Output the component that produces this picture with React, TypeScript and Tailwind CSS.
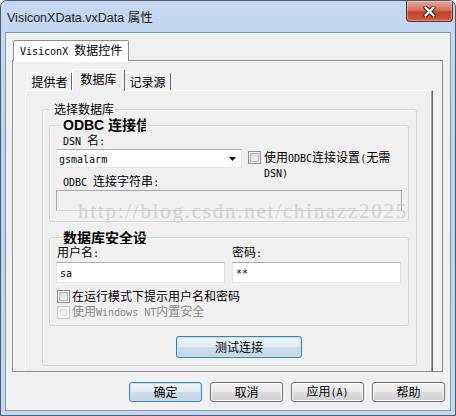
import React from "react";

// latin runs use the narrow mono face, CJK runs inherit 12px
const Mixed = ({ text }: { text: string }) => {
  const parts = text.match(/[\x00-\xff]+|[^\x00-\xff]+/g) || [];
  return (
    <span>
      {parts.map((p, i) =>
        /^[\x00-\xff]/.test(p) ? (
          <span key={i} className="font-['DejaVu_Sans_Mono',monospace] text-[10px]">
            {p}
          </span>
        ) : (
          <span key={i}>{p}</span>
        )
      )}
    </span>
  );
};

const Check = ({ disabled }: { disabled?: boolean }) =>
  disabled ? (
    <span className="block h-[13px] w-[13px] shrink-0 border border-[#c8c8c8] bg-[#f4f4f4] p-[2px]">
      <span className="block h-full w-full border border-[#dedede] bg-[#f0f0f0]" />
    </span>
  ) : (
    <span className="block h-[13px] w-[13px] shrink-0 border border-[#8e8f8f] bg-[#f4f4f4] p-[1px]">
      <span className="block h-full w-full border border-[#b5b8bd] bg-[linear-gradient(135deg,#d6d8db,#f8f8f8)]" />
    </span>
  );

const Btn = ({ label, def, className = "" }: { label: string; def?: boolean; className?: string }) => (
  <div
    className={
      def
        ? `flex items-center justify-center rounded-[3px] border border-[#3c7fb1] bg-[linear-gradient(#eef5fa_0%,#dfeaf2_50%,#cddde9_50%,#c3d6e4_100%)] shadow-[inset_0_0_0_1px_#bfe4f7] ${className}`
        : `flex items-center justify-center rounded-[3px] border border-[#707070] bg-[linear-gradient(#f2f2f2_0%,#ebebeb_50%,#dddddd_50%,#cfcfcf_100%)] shadow-[inset_0_0_0_1px_#fbfbfb] ${className}`
    }
  >
    <Mixed text={label} />
  </div>
);

const Field = ({ value, className = "" }: { value: string; className?: string }) => (
  <div
    className={`flex h-[21px] items-center border border-[#abadb3] border-x-[#e2e3ea] border-b-[#e3e9ef] bg-white pl-[3px] ${className}`}
  >
    <Mixed text={value} />
  </div>
);

export default function App() {
  return (
    <div className="relative h-[416px] w-[456px] overflow-hidden rounded-t-[7px] border border-[#4c5a6c] bg-[linear-gradient(180deg,#c4d9f0_0%,#bad2ec_45%,#c3d8ef_100%)] font-['Noto_Sans_CJK_SC',sans-serif] text-[12px] leading-[14px] text-black">
      {/* title bar */}
      <div className="flex h-[31px] items-start justify-between">
        <div className="pl-[6px] pt-[10px] font-['Liberation_Sans','Noto_Sans_CJK_SC',sans-serif] text-[12.5px] leading-[14px] text-[#1b1b1b]">
          VisiconXData.vxData 属性
        </div>
        <div className="mr-[2px] flex h-[21px] w-[47px] items-center justify-center rounded-b-[4px] border border-t-0 border-[#5a2b26] bg-[linear-gradient(#e6aa9b_0%,#d4735d_45%,#c2412a_55%,#cf5b40_100%)] shadow-[inset_0_0_0_1px_rgba(255,255,255,0.35)]">
          <svg width="13" height="11" viewBox="0 0 13 11">
            <path d="M2.5 1.5 L10.5 9.5 M10.5 1.5 L2.5 9.5" stroke="#4a201b" strokeWidth="4.2" strokeLinecap="round" />
            <path d="M2.5 1.5 L10.5 9.5 M10.5 1.5 L2.5 9.5" stroke="#ffffff" strokeWidth="2.4" strokeLinecap="round" />
          </svg>
        </div>
      </div>

      {/* client area */}
      <div className="ml-[4px] flex h-[379px] w-[446px] flex-col border border-[#8197b5] bg-[#f0f0f0] pl-[6px] pr-[7px] pt-[7px]">
        <div className="flex h-[20px] items-start pl-[1px]">
          <div className="relative z-10 flex h-[21px] items-center rounded-t-[2px] border border-b-0 border-[#898c95] bg-white px-[6px]">
            <Mixed text="VisiconX 数据控件" />
          </div>
        </div>

        <div className="flex h-[312px] flex-col overflow-hidden border border-[#898c95] bg-[#f0f0f0] pl-[12px] pr-[9px] pt-[8px] shadow-[inset_1px_1px_0_#ffffff]">
          {/* inner tabs */}
          <div className="ml-[2px] flex h-[21px] items-end">
            <div className="flex h-[18px] w-[45px] items-center justify-center rounded-t-[2px] border-l border-t border-r border-l-white border-t-white border-r-[#696969]">
              提供者
            </div>
            <div className="relative z-10 -mb-px flex h-[22px] w-[53px] items-start justify-center rounded-t-[2px] border-l border-t border-r border-l-white border-t-white border-r-[#696969] bg-[#f0f0f0] pt-[2px]">
              数据库
            </div>
            <div className="flex h-[18px] w-[46px] items-center justify-center rounded-t-[2px] border-t border-r border-t-white border-r-[#696969]">
              记录源
            </div>
          </div>

          <div className="flex-1 border-l border-r border-t border-l-white border-r-[#696969] border-t-white pl-[16px] pt-[11px] shadow-[inset_-1px_0_0_#a0a0a0]">
            <fieldset className="w-[375px] rounded-[3px] border border-[#d5d5d5] pb-[7px] pl-[6px] shadow-[inset_1px_1px_0_#ffffff]">
              <legend className="ml-[4px] px-[1px] leading-[14px]">选择数据库</legend>

              <fieldset className="mt-[2px] w-[360px] rounded-[3px] border border-[#d5d5d5] pb-[10px] pl-[6px] shadow-[inset_1px_1px_0_#ffffff]">
                <legend className="ml-[6px] w-[84px] overflow-hidden whitespace-nowrap px-[1px] font-['Liberation_Sans','Noto_Sans_CJK_SC',sans-serif] text-[14px] font-bold leading-[14px]">
                  ODBC 连接信息
                </legend>
                <div className="ml-[7px] mt-[1px] h-[14px]">
                  <Mixed text="DSN 名:" />
                </div>
                <div className="mt-[2px] flex h-[25px] items-start">
                  <div className="flex h-[19px] w-[186px] items-center justify-between border border-[#abadb3] border-x-[#e2e3ea] border-b-[#e3e9ef] bg-white pl-[2px] pr-[5px]">
                    <Mixed text="gsmalarm" />
                    <svg width="7" height="4" viewBox="0 0 7 4">
                      <path d="M0 0 H7 L3.5 4 Z" fill="#000" />
                    </svg>
                  </div>
                  <div className="ml-[6px] mt-[2px] flex gap-[3px]">
                    <Check />
                    <div className="-mt-[1px] w-[132px] leading-[13px]">
                      <Mixed text="使用ODBC连接设置(无需 DSN)" />
                    </div>
                  </div>
                </div>
                <div className="ml-[7px] h-[14px]">
                  <Mixed text="ODBC 连接字符串:" />
                </div>
                <div className="mt-[2px] h-[21px] w-[346px] border border-[#a8a8a8] border-b-[#d6d6d6] bg-[#f0f0f0]" />
              </fieldset>

              <fieldset className="mt-[8px] w-[360px] rounded-[3px] border border-[#d5d5d5] pb-[6px] pl-[6px] shadow-[inset_1px_1px_0_#ffffff]">
                <legend className="ml-[6px] w-[84px] overflow-hidden whitespace-nowrap px-[1px] font-['Noto_Sans_CJK_SC',sans-serif] text-[14px] font-bold leading-[14px]">
                  数据库安全设置
                </legend>
                <div className="flex gap-[7px] pt-[1px]">
                  <div className="w-[169px]">
                    <div className="ml-[1px] h-[14px]">
                      <Mixed text="用户名:" />
                    </div>
                    <Field value="sa" className="mt-[3px]" />
                  </div>
                  <div className="w-[169px]">
                    <div className="h-[14px]">
                      <Mixed text="密码:" />
                    </div>
                    <Field value="**" className="mt-[3px]" />
                  </div>
                </div>
                <div className="ml-[1px] mt-[6px] flex h-[14px] items-center gap-[2px]">
                  <Check />
                  <span>在运行模式下提示用户名和密码</span>
                </div>
                <div className="ml-[1px] mt-[2px] flex h-[14px] items-center gap-[2px] text-[#8a8a8a]">
                  <Check disabled />
                  <Mixed text="使用Windows NT内置安全" />
                </div>
              </fieldset>

              <Btn label="测试连接" def className="ml-[127px] mt-[10px] h-[22px] w-[126px]" />
            </fieldset>
          </div>
        </div>

        <div className="-mr-[2px] mt-[10px] flex justify-end gap-[8px]">
          <Btn label="确定" def className="h-[20px] w-[73px]" />
          <Btn label="取消" className="h-[20px] w-[73px]" />
          <Btn label="应用(A)" className="h-[20px] w-[73px]" />
          <Btn label="帮助" className="h-[20px] w-[73px]" />
        </div>
      </div>

      {/* csdn watermark */}
      <div className="pointer-events-none absolute left-[77px] top-[200px] font-['Liberation_Serif',serif] text-[21px] leading-[21px] tracking-[1.75px] text-[#cdcdcd] opacity-80">
        http://blog.csdn.net/chinazz2025
      </div>
    </div>
  );
}
